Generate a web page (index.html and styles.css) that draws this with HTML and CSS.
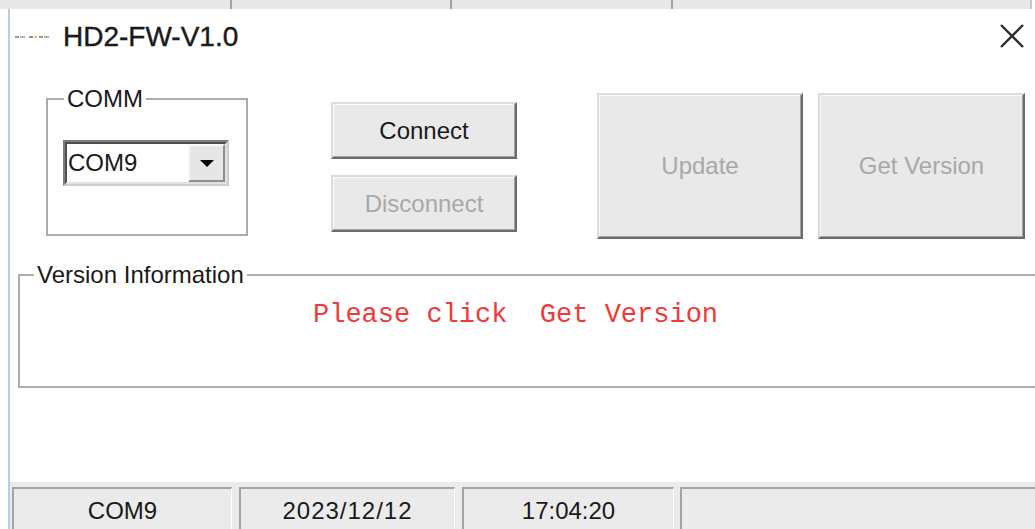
FILE: index.html
```html
<!DOCTYPE html>
<html lang="en">
<head>
<meta charset="utf-8">
<title>HD2-FW-V1.0</title>
<link rel="stylesheet" href="styles.css">
</head>
<body>
  <div class="strip">
    <span class="seg s1"></span>
    <span class="seg s2"></span>
    <span class="seg s3"></span>
    <span class="seg s4"></span>
  </div>

  <div class="window">
    <div class="titlebar">
      <svg class="app-icon" viewBox="0 0 34 6" aria-hidden="true">
        <rect x="0" y="2" width="4" height="2" fill="#9a9a9a"/>
        <rect x="5" y="2" width="5" height="2" fill="#b4b4b4"/>
        <rect x="14" y="2" width="4" height="2" fill="#8c8c8c"/>
        <rect x="19" y="2" width="3" height="2" fill="#d8d060"/>
        <rect x="24" y="2" width="4" height="2" fill="#9a9a9a"/>
        <rect x="29" y="2" width="5" height="2" fill="#b0b0b0"/>
      </svg>
      <span class="title">HD2-FW-V1.0</span>
      <svg class="close" viewBox="0 0 26 26" aria-hidden="true">
        <path d="M2 2 L24 24 M24 2 L2 24" stroke="#2e2e2e" stroke-width="2.4" fill="none"/>
      </svg>
    </div>

    <div class="controls">
      <fieldset class="group comm">
        <legend>COMM</legend>
        <div class="combo">
          <div class="combo-field">
            <span class="combo-value">COM9</span>
            <span class="combo-btn"><i class="arrow"></i></span>
          </div>
        </div>
      </fieldset>

      <div class="conn-col">
        <button class="btn conn" type="button">Connect</button>
        <button class="btn conn" type="button" disabled>Disconnect</button>
      </div>

      <button class="btn big update" type="button" disabled>Update</button>
      <button class="btn big getver" type="button" disabled>Get Version</button>
    </div>

    <fieldset class="group info">
      <legend>Version Information</legend>
      <div class="info-text">Please click  Get Version</div>
    </fieldset>

    <div class="statusbar">
      <div class="pane p1">COM9</div>
      <div class="pane p2">2023/12/12</div>
      <div class="pane p3">17:04:20</div>
      <div class="pane p4"></div>
    </div>
  </div>
</body>
</html>
```

FILE: styles.css
```css
body {
  margin: 0;
  width: 1035px;
  height: 529px;
  overflow: hidden;
  background: #ffffff;
  font-family: "Liberation Sans", Arial, sans-serif;
  color: #1a1a1a;
}

/* status strip of the window behind */
.strip {
  display: flex;
  height: 9px;
}
.seg {
  background: #e8e8e6;
  border-right: 2px solid #a4a4a4;
}
.s1 { width: 230px; }
.s2 { width: 218px; }
.s3 { width: 219px; }
.s4 {
  flex: 1;
  margin-right: 3px;
  border-right-color: #b9c9d6;
}

/* dialog */
.window {
  margin-left: 8px;
  border-left: 2px solid #bccdd9;
  height: 520px;
  display: flex;
  flex-direction: column;
}

.titlebar {
  height: 56px;
  flex: none;
  display: flex;
  align-items: center;
  padding-left: 5px;
}
.app-icon {
  width: 34px;
  height: 6px;
  margin-right: 14px;
}
.title {
  font-size: 28px;
  line-height: 32px;
  color: #1a1a1a;
  -webkit-text-stroke: 0.4px #1a1a1a;
}
.close {
  width: 26px;
  height: 26px;
  margin-left: auto;
  margin-right: 10px;
  margin-bottom: 2px;
}

/* top controls row */
.controls {
  display: flex;
  align-items: flex-start;
  flex: none;
  height: 174px;
  padding-left: 36px;
}

.group {
  padding: 0;
  min-inline-size: 0;
  box-sizing: border-box;
  border: 2px solid #ababab;
}
.group legend {
  font-size: 24px;
  line-height: 24px;
  padding: 0 3px;
  color: #1a1a1a;
}

.comm {
  width: 202px;
  height: 149px;
  margin: 22px 0 0 0;
}
.comm legend {
  margin-left: 16px;
}

/* combo box */
.combo {
  margin: 29px 0 0 15px;
  width: 166px;
  height: 46px;
  box-sizing: border-box;
  border: 2px solid;
  border-color: #7e7e7e #cdcdcd #cdcdcd #7e7e7e;
}
.combo-field {
  height: 100%;
  box-sizing: border-box;
  border: 2px solid;
  border-color: #505050 #e2e2e2 #e2e2e2 #505050;
  background: #ffffff;
  display: flex;
}
.combo-value {
  flex: 1;
  font-size: 24px;
  line-height: 38px;
  padding-left: 1px;
}
.combo-btn {
  width: 37px;
  box-sizing: border-box;
  background: #e6e6e6;
  border: 2px solid;
  border-color: #f8f8f8 #8e8e8e #8e8e8e #f8f8f8;
  display: flex;
  align-items: center;
  justify-content: center;
}
.arrow {
  width: 0;
  height: 0;
  border-left: 7px solid transparent;
  border-right: 7px solid transparent;
  border-top: 7px solid #000000;
}

/* push buttons */
.btn {
  font: inherit;
  font-size: 24px;
  color: #1a1a1a;
  background: #e9e9e9;
  box-sizing: border-box;
  margin: 0;
  padding: 0;
  border: 2px solid;
  border-color: #dcdcdc #6b6b6b #6b6b6b #dcdcdc;
  box-shadow: inset -1px -1px #a4a4a4, inset 1px 1px #fafafa;
}
.btn:disabled {
  color: #a8a8a8;
}

.conn-col {
  margin: 37px 0 0 83px;
  display: flex;
  flex-direction: column;
  gap: 16px;
}
.conn {
  width: 186px;
  height: 57px;
}
.big {
  height: 146px;
  margin-top: 28px;
}
.update {
  width: 206px;
  margin-left: 80px;
}
.getver {
  width: 207px;
  margin-left: 15px;
}

/* version information */
.info {
  width: 1030px;
  height: 125px;
  flex: none;
  margin: 24px 0 0 8px;
}
.info legend {
  margin-left: 14px;
}
.info-text {
  font-family: "Liberation Mono", "Courier New", monospace;
  font-size: 27px;
  line-height: 30px;
  color: #f03a3a;
  white-space: pre;
  margin: 13px 0 0 293px;
}

/* status bar */
.statusbar {
  margin-top: auto;
  flex: none;
  height: 47px;
  box-sizing: border-box;
  padding: 5px 0 0 2px;
  background: #ebebeb;
  display: flex;
  gap: 7px;
}
.pane {
  height: 42px;
  box-sizing: border-box;
  border-top: 2px solid #a4a4a4;
  border-left: 2px solid #a4a4a4;
  border-right: 1px solid #ffffff;
  padding-top: 4px;
  line-height: 36px;
  text-align: center;
  font-size: 24px;
  color: #1a1a1a;
}
.p1 { width: 220px; }
.p2 { width: 216px; letter-spacing: 1px; }
.p3 { width: 212px; margin-right: -1px; }
.p4 { flex: 1; margin-right: -10px; }
```
